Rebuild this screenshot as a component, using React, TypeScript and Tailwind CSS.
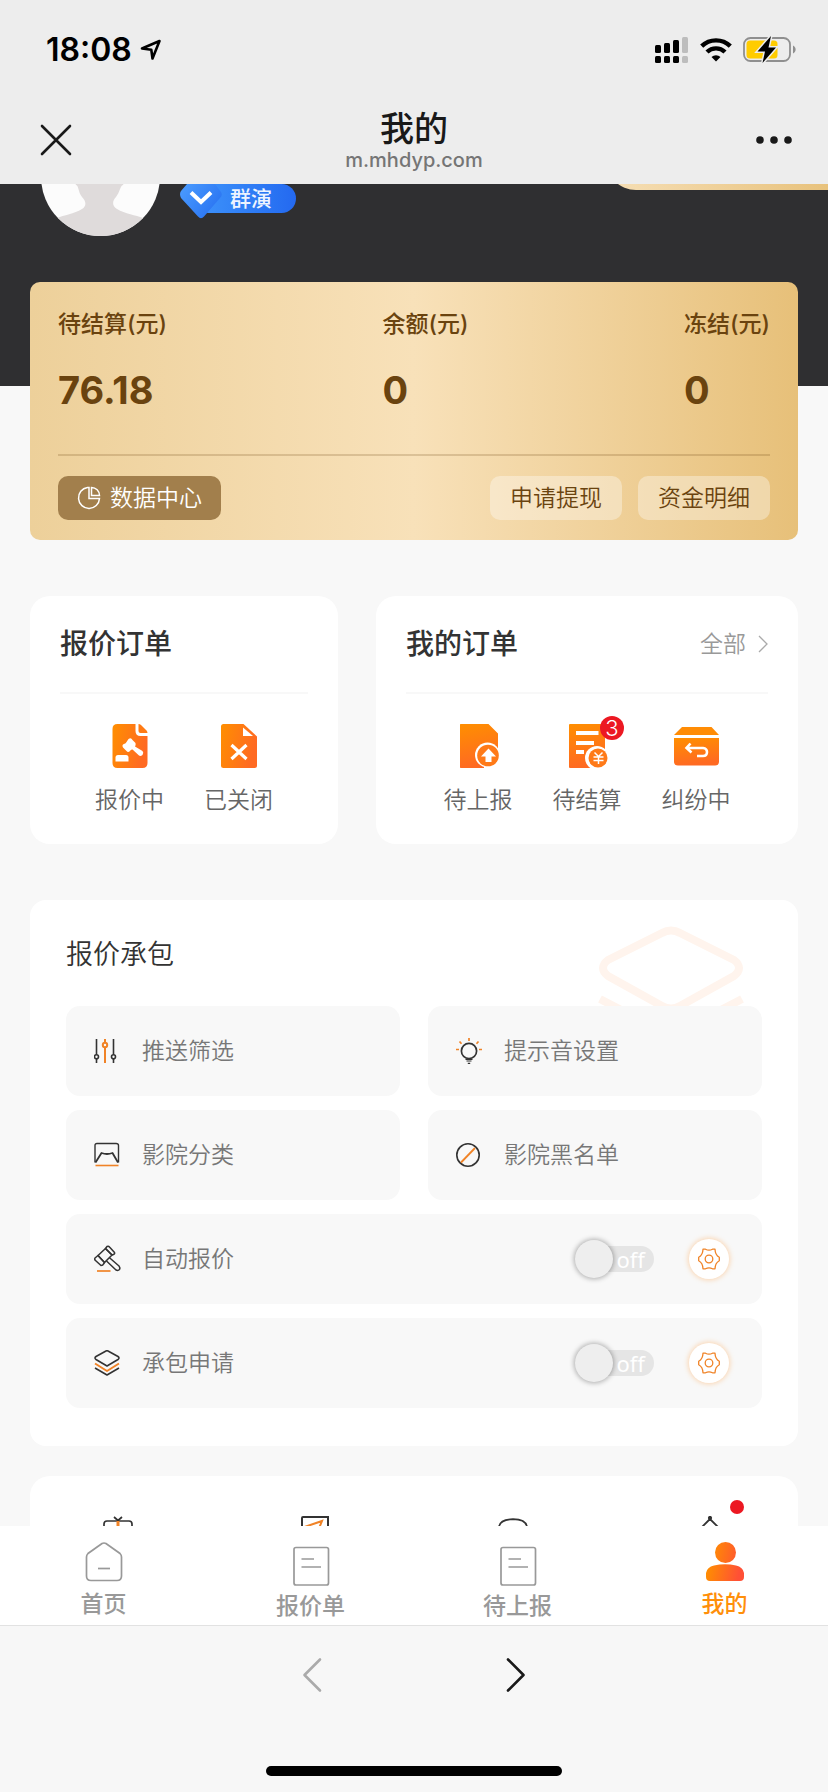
import React from "react";

const FONT = "font-['Inter','Noto_Sans_CJK_SC',sans-serif]";

function OrangeGradient({ id, vertical = false }: { id: string; vertical?: boolean }) {
  return (
    <defs>
      <linearGradient id={id} x1="0" y1="0" x2={vertical ? "0.2" : "1"} y2={vertical ? "1" : "0.3"}>
        <stop offset="0" stopColor="#ff8f00" />
        <stop offset="1" stopColor="#ff6a22" />
      </linearGradient>
    </defs>
  );
}

function StatusBar() {
  return (
    <div className="flex h-[100px] items-center justify-between pl-[46px] pr-[31px]">
      <div className="flex items-center gap-2">
        <span className="text-[32px] leading-10 font-semibold text-black">18:08</span>
        <svg width="22" height="22" viewBox="0 0 22 22" fill="none" stroke="#000" strokeWidth="2.6" strokeLinejoin="round" strokeLinecap="round">
          <path d="M2 9.5 19.5 2 12.5 19.5 11.3 10.7Z" />
        </svg>
      </div>
      <div className="flex items-center gap-[11px]">
        <svg width="34" height="28" viewBox="0 0 34 28">
          <g fill="#000">
            <rect x="0" y="9" width="6" height="8" rx="1.5" />
            <rect x="9" y="7" width="6" height="10" rx="1.5" />
            <rect x="18" y="4" width="6" height="13" rx="1.5" />
            <rect x="0" y="20" width="6" height="7" rx="1.5" />
            <rect x="9" y="20" width="6" height="7" rx="1.5" />
            <rect x="18" y="20" width="6" height="7" rx="1.5" />
          </g>
          <g fill="#bdbdbd">
            <rect x="27" y="1" width="6" height="16" rx="1.5" />
            <rect x="27" y="20" width="6" height="7" rx="1.5" />
          </g>
        </svg>
        <svg width="32" height="24" viewBox="0 0 32 24" fill="none" stroke="#000" strokeWidth="4.4">
          <path d="M1.7 8.2A20.5 20.5 0 0 1 30.3 8.2" />
          <path d="M7 14A13 13 0 0 1 25 14" />
          <path d="M16 23.5 11.5 19A6.5 6.5 0 0 1 20.500 19Z" fill="#000" stroke="none" />
        </svg>
        <svg width="54" height="28" viewBox="0 0 54 28">
          <rect x="1" y="2" width="46" height="23" rx="6.500" fill="none" stroke="#8f8f8f" strokeWidth="1.8" />
          <rect x="3.500" y="4.500" width="31" height="18" rx="3.500" fill="#ffcc00" />
          <path d="M50 9.500C53.500 11 53.500 16 50 17.500Z" fill="#8f8f8f" />
          <path d="M28 0 14.500 15.500H22L19.500 27 33 11.500H25.500Z" fill="#000" stroke="#ededed" strokeWidth="3" paintOrder="stroke" />
        </svg>
      </div>
    </div>
  );
}

function TitleBar() {
  return (
    <div className="flex h-[84px] items-center justify-between px-[36px]">
      <button aria-label="关闭" className="mb-1 flex w-[60px] justify-start">
        <svg width="40" height="40" viewBox="0 0 40 40" stroke="#191919" strokeWidth="2.600" strokeLinecap="round">
          <path d="M6 6 34 34M34 6 6 34" />
        </svg>
      </button>
      <div className="mb-[3px] flex flex-col items-center">
        <h1 className="text-[34px] leading-[38px] font-medium text-[#191919]">我的</h1>
        <p className="text-[20px] leading-6 font-medium text-[#757575]">m.mhdyp.com</p>
      </div>
      <button aria-label="更多" className="mb-1 flex w-[60px] justify-end">
        <svg width="38" height="10" viewBox="0 0 38 10" fill="#191919">
          <circle cx="6" cy="5" r="3.800" />
          <circle cx="20" cy="5" r="3.800" />
          <circle cx="34" cy="5" r="3.800" />
        </svg>
      </button>
    </div>
  );
}

function Profile() {
  return (
    <section className="-mt-[67px] flex items-start bg-[#2f2f31] pb-[150px] pl-[41px]">
      <svg width="119" height="119" viewBox="0 0 119 119" className="shrink-0">
        <clipPath id="avatar">
          <circle cx="59.500" cy="59.500" r="59.500" />
        </clipPath>
        <g clipPath="url(#avatar)">
          <rect width="119" height="119" fill="#fcfcfc" />
          <path
            d="M59 18C42 18 32 30 32 46C32 56 33 63 35 68C38 69 37 75 41 80C45 84 46 89 41 92C33 97 23 98 16 101L8 119H111L102 101C95 98 84 97 76 92C71 89 71 84 75 80C79 75 79 69 82 68C85 63 86 56 86 46C86 30 76 18 59 18Z"
            fill="#dfdbdb"
          />
        </g>
      </svg>
      <div className="relative mt-[67px] ml-5">
        <span className="ml-[14px] flex h-[29px] w-[102px] items-center rounded-full bg-linear-to-r from-[#3f94fb] to-[#2469f0] pl-9 text-[21px] leading-none font-medium text-[#eef4ff]">
          群演
        </span>
        <svg width="44" height="36" viewBox="0 0 44 36" className="absolute top-0 left-0" fill="none">
          <defs>
            <linearGradient id="g-shield" x1="0" y1="0" x2="1" y2="0.6">
              <stop offset="0" stopColor="#4c9dff" />
              <stop offset="1" stopColor="#2a74f2" />
            </linearGradient>
          </defs>
          <path d="M7 0H35L41 8Q43 11 40 14L24 32.500Q21 36 18 32.500L1 14Q-1 10 1 7Z" fill="url(#g-shield)" />
          <path d="M11 8.500 21 18 31 8.500" stroke="#fff" strokeWidth="4" />
        </svg>
      </div>
      <div className="ml-auto h-[73px] w-[222px] rounded-bl-[30px] bg-linear-to-r from-[#f6dfb6] to-[#e8c27c]" />
    </section>
  );
}

const balances = [
  { label: "待结算(元)", value: "76.18" },
  { label: "余额(元)", value: "0" },
  { label: "冻结(元)", value: "0" },
];

function Wallet() {
  return (
    <section className="relative mx-[30px] -mt-[104px] rounded-[10px] bg-linear-to-r from-[#edd09a] via-[#f8e1b9] to-[#e7c079] px-7 pt-6 pb-5 text-[#6a430f]">
      <dl className="flex justify-between">
        {balances.map((b) => (
          <div key={b.label}>
            <dt className="text-[23px] leading-9 font-medium">{b.label}</dt>
            <dd className="mt-6 text-[38px] leading-12 font-bold">{b.value}</dd>
          </div>
        ))}
      </dl>
      <hr className="mt-10 border-t-2 border-[#6a430f]/20" />
      <div className="mt-5 flex items-center gap-4">
        <button className="mr-auto flex h-11 items-center gap-[9px] rounded-[10px] bg-[#a27f4c] px-[19px] text-[23px] font-[350] text-white">
          <svg width="24" height="24" viewBox="0 0 24 24" fill="none" stroke="#fff" strokeWidth="1.500">
            <path d="M10.500 1.500A10.500 10.500 0 1 0 22.500 12.500H12V1.500Z" />
            <path d="M14.500 1.500A8 8 0 0 1 22.500 9.500H14.500Z" />
          </svg>
          数据中心
        </button>
        <button className="h-11 rounded-[10px] bg-white/35 px-5 text-[23px] font-[350]">申请提现</button>
        <button className="h-11 rounded-[10px] bg-white/35 px-5 text-[23px] font-[350]">资金明细</button>
      </div>
    </section>
  );
}

function BiddingIcon() {
  return (
    <svg width="48" height="44" viewBox="0 0 48 44">
      <OrangeGradient id="g-bidding" />
      <path d="M11.500 0H29.500V7Q29.500 12 34.500 12H41.500V39Q41.500 44 36.500 44H11.500Q6.500 44 6.500 39V5Q6.500 0 11.500 0Z" fill="url(#g-bidding)" />
      <path d="M32.500 0Q34 0 35 1L40.500 6.500Q41.500 7.500 41.500 9H34.500Q32.500 9 32.500 7Z" fill="#ff7a14" />
      <g fill="#fff">
        <path d="M22.500 15Q25 13 26.500 16L29.500 19Q30 21 29 22.500L36.500 27Q38 28.500 36.500 31Q34.500 32.500 33 31.500L26.500 25.500Q25 25 24 27Q22 29 20.500 27L17 23.500Q15.500 21 18 20Q20 19.500 20.500 18Z" />
        <path d="M9.500 37.500V33.500Q9.500 31 12 31H20Q22.500 31 22.500 33.500V37.500Z" />
      </g>
    </svg>
  );
}

function ClosedIcon() {
  return (
    <svg width="48" height="44" viewBox="0 0 48 44">
      <OrangeGradient id="g-closed" />
      <path d="M8.500 0H28.500L42 12.500V41.500Q42 44 39.500 44H8.500Q6 44 6 41.500V2.500Q6 0 8.500 0Z" fill="url(#g-closed)" />
      <path d="M28 3.500V12H38Z" fill="#fff" />
      <path d="M16.500 21 31.500 35M31.500 21 16.500 35" stroke="#fff" strokeWidth="3.200" />
    </svg>
  );
}

function ReportIcon() {
  return (
    <svg width="48" height="44" viewBox="0 0 48 44">
      <OrangeGradient id="g-report" vertical />
      <path d="M6.500 0H34.500L44 9.500V31H30V44H6.500Q6 44 6 43V1Q6 0 6.500 0Z" fill="url(#g-report)" />
      <circle cx="33.500" cy="31" r="12.500" fill="#fff" />
      <circle cx="34" cy="31.500" r="10.800" fill="#ff7a18" />
      <path d="M34.500 24.500 42 32.500H37.500V38H31.500V32.500H27Z" fill="#fff" />
    </svg>
  );
}

function SettleIcon() {
  return (
    <svg width="48" height="44" viewBox="0 0 48 44">
      <OrangeGradient id="g-settle" vertical />
      <path d="M7 0H42V34H30V44H7Q6 44 6 43V1Q6 0 7 0Z" fill="url(#g-settle)" />
      <path d="M13 7H35.500V11H13ZM13 17H31V21H13ZM13 26H21V30H13Z" fill="#fff" />
      <circle cx="34" cy="34" r="12" fill="#fff" />
      <circle cx="35" cy="34" r="9.500" fill="#ff7a18" />
      <path d="M31.500 28.500 35.500 32.500 39.500 28.500M30.500 33H40.500M30.500 36.500H40.500M35.500 32.500V40" stroke="#fff" strokeWidth="1.500" fill="none" />
    </svg>
  );
}

function DisputeIcon() {
  return (
    <svg width="48" height="44" viewBox="0 0 48 44">
      <OrangeGradient id="g-dispute" vertical />
      <path d="M10 3H39.500L47 11H2Z" fill="#ff8c05" />
      <path d="M2 14H47V37.500Q47 41.500 43 41.500H6Q2 41.500 2 37.500Z" fill="url(#g-dispute)" />
      <path d="M18.500 19.500 14.500 24 19.500 28.500M15 24H31Q35 24.500 35 28Q35 32 31 32H25" stroke="#fff" strokeWidth="2.600" fill="none" />
    </svg>
  );
}

function OrderItem({ icon, label, count }: { icon: React.ReactNode; label: string; count?: number }) {
  return (
    <a href="#" className="flex w-[109px] flex-col items-center gap-[14px] text-[23px] leading-9 font-[350] text-[#666]">
      <span className="relative">
        {icon}
        {count !== undefined && (
          <span className="absolute -top-2 left-[37px] flex size-6 items-center justify-center rounded-full bg-[#ec1822] text-[22px] leading-none text-white">
            {count}
          </span>
        )}
      </span>
      {label}
    </a>
  );
}

function Orders() {
  return (
    <div className="mx-[30px] mt-14 grid grid-cols-[308fr_422fr] gap-[38px]">
      <section className="rounded-[20px] bg-white px-[30px] pb-[26px]">
        <h2 className="flex h-[98px] items-center border-b-2 border-[#f8f8f8] text-[28px] font-medium text-[#333]">报价订单</h2>
        <div className="mt-[30px] flex justify-center">
          <OrderItem icon={<BiddingIcon />} label="报价中" />
          <OrderItem icon={<ClosedIcon />} label="已关闭" />
        </div>
      </section>
      <section className="rounded-[20px] bg-white px-[30px] pb-[26px]">
        <div className="flex h-[98px] items-center justify-between border-b-2 border-[#f8f8f8]">
          <h2 className="text-[28px] font-medium text-[#333]">我的订单</h2>
          <a href="#" className="flex items-center gap-3 text-[23px] font-[350] text-[#999]">
            全部
            <svg width="10" height="18" viewBox="0 0 10 18" fill="none" stroke="#aaa" strokeWidth="1.300">
              <path d="M1 1 9 9 1 17" />
            </svg>
          </a>
        </div>
        <div className="mt-[30px] flex justify-center">
          <OrderItem icon={<ReportIcon />} label="待上报" />
          <OrderItem icon={<SettleIcon />} label="待结算" count={3} />
          <OrderItem icon={<DisputeIcon />} label="纠纷中" />
        </div>
      </section>
    </div>
  );
}

const DARK = "#333";
const ORANGE = "#f08327";

const FilterIcon = () => (
  <svg width="26" height="26" viewBox="0 0 26 26" fill="none" stroke={DARK} strokeWidth="1.600">
    <path d="M2.500 1V16.500M2.500 21V25M19.500 1V16.500M19.500 21V25" />
    <circle cx="2.500" cy="18.800" r="2" />
    <circle cx="19.500" cy="18.800" r="2" />
    <g stroke={ORANGE} strokeWidth="2">
      <path d="M11 1V5M11 9.500V25" />
      <circle cx="11" cy="7" r="2.200" />
    </g>
  </svg>
);

const BulbIcon = () => (
  <svg width="26" height="26" viewBox="0 0 26 26" fill="none">
    <circle cx="13" cy="13" r="7.600" stroke={DARK} strokeWidth="1.700" />
    <path d="M9.500 21.500H16.500M10.500 23H15.500M11.800 25.300H14.200" stroke={DARK} strokeWidth="1.200" />
    <path d="M13 0V3M3.500 3.500 5.500 5.800M22.500 3.500 20.500 5.800M0 11.500H3M23 11.500H26" stroke={ORANGE} strokeWidth="1.700" />
  </svg>
);

const CinemaIcon = () => (
  <svg width="26" height="26" viewBox="0 0 26 26" fill="none" stroke={DARK} strokeLinejoin="round">
    <path d="M1 20.500V3.500Q1 1.500 3 1.500H22Q24.500 1.500 24.500 3.500V20.500" strokeWidth="1.400" />
    <path d="M1.500 20.500 7.500 11Q13 13 18.500 11L24 20.500" strokeWidth="1.800" />
    <path d="M1.500 23.500H24.500" stroke={ORANGE} strokeWidth="1.600" />
  </svg>
);

const BlockIcon = () => (
  <svg width="26" height="26" viewBox="0 0 26 26" fill="none" strokeWidth="1.600">
    <circle cx="12" cy="13" r="11.200" stroke={DARK} />
    <path d="M5 20.500 19 6" stroke={ORANGE} strokeWidth="1.800" />
  </svg>
);

const GavelIcon = () => (
  <svg width="28" height="28" viewBox="0 0 28 28" fill="none" stroke={DARK} strokeWidth="1.500" strokeLinejoin="round" className="-mr-[2px]">
    <path d="M11.500 3.500 13 1.500Q14.500 .8 15.500 2L20.500 7.500Q21 9 19.500 9.500L18 10Z" />
    <path d="M4 10.500 11.500 3.500 18 10 10.500 17.500Z" />
    <path d="M4 10.500 1 13Q.3 14.500 1.500 15.500L7 20.500Q9 20.500 9.500 19L10.500 17.500Z" />
    <path d="M12.500 16 22 25Q24 26 25.500 24.500Q26.500 23 25 21L15.500 12.800" />
    <path d="M3 26H16.500" stroke={ORANGE} strokeWidth="1.700" />
  </svg>
);

const LayersIcon = () => (
  <svg width="26" height="26" viewBox="0 0 26 26" fill="none" stroke={DARK} strokeWidth="1.600" strokeLinejoin="round">
    <path d="M12 1Q13 .5 14 1L24 6.500Q26 8 24 9.500L13 16 2 9.500Q0 8 2 6.500Z" />
    <path d="M1 13.500 13 21 25 13.500" stroke={ORANGE} strokeWidth="2" />
    <path d="M1 18 13 25 25 18" />
  </svg>
);

function Tile({ icon, label }: { icon: React.ReactNode; label: string }) {
  return (
    <a href="#" className="flex h-[90px] items-center gap-[22px] rounded-[14px] bg-[#f8f8f8] px-7 text-[23px] font-[350] text-[#777]">
      {icon}
      {label}
    </a>
  );
}

function GearIcon() {
  return (
    <svg width="22" height="22" viewBox="0 0 22 22" fill="none" stroke={ORANGE} strokeWidth="1.300" strokeLinejoin="round">
      <path d="M5 1.200H7.500Q11 3.200 14.500 1.200H17Q17.200 7 21.300 9.200V12.800Q17.200 15 17 20.800H14.500Q11 18.800 7.500 20.800H5Q4.800 15 .7 12.800V9.200Q4.800 7 5 1.200Z" />
      <circle cx="11" cy="11" r="3.800" />
    </svg>
  );
}

function SwitchRow({ id, icon, label }: { id: string; icon: React.ReactNode; label: string }) {
  return (
    <div className="flex h-[90px] items-center rounded-[14px] bg-[#f8f8f8] pr-[33px] pl-7 text-[23px] font-[350] text-[#777]">
      <label htmlFor={id} className="flex grow items-center gap-[22px]">
        {icon}
        {label}
      </label>
      <label htmlFor={id} className="flex items-center">
        <input id={id} type="checkbox" role="switch" className="peer sr-only" />
        <span className="relative z-10 size-[38px] rounded-full bg-[#eee] shadow-[0_0_5px_1px_rgba(0,0,0,0.3)]" />
        <span className="-ml-[19px] flex h-[26px] w-[60px] items-center justify-end rounded-r-full bg-[#e5e5e5] pr-[9px] font-['Noto_Sans',sans-serif] text-[22px] leading-none font-normal text-white">
          off
        </span>
      </label>
      <button
        aria-label={`${label}设置`}
        className="ml-[35px] flex size-10 items-center justify-center rounded-full bg-white shadow-[0_0_5px_1px_rgba(255,160,70,0.4)]"
      >
        <GearIcon />
      </button>
    </div>
  );
}

function Contracting() {
  return (
    <section className="relative mx-[30px] mt-14 rounded-2xl bg-white px-9 pb-[38px]">
      <svg width="146" height="110" viewBox="0 0 146 110" fill="none" stroke="#fff4ed" strokeWidth="8" strokeLinejoin="round" className="absolute top-[26px] right-[54px]">
        <path d="M64 7Q73 2 82 7L136 34Q146 42 136 50L82 80Q73 85 64 80L10 50Q0 42 10 34Z" />
        <path d="M2 73 73 110 144 73" />
      </svg>
      <h2 className="flex h-[106px] items-center pt-1 text-[27px] font-[350] text-[#333]">报价承包</h2>
      <div className="relative flex flex-col gap-[14px]">
        <div className="grid grid-cols-2 gap-x-7 gap-y-[14px]">
          <Tile icon={<FilterIcon />} label="推送筛选" />
          <Tile icon={<BulbIcon />} label="提示音设置" />
          <Tile icon={<CinemaIcon />} label="影院分类" />
          <Tile icon={<BlockIcon />} label="影院黑名单" />
        </div>
        <SwitchRow id="auto-quote" icon={<GavelIcon />} label="自动报价" />
        <SwitchRow id="contract-apply" icon={<LayersIcon />} label="承包申请" />
      </div>
    </section>
  );
}

function Shortcuts() {
  return (
    <section className="mx-[30px] mt-[30px] flex h-40 justify-between rounded-t-[20px] bg-white px-[42px] pt-10">
      <a href="#" aria-label="礼物" className="flex w-[92px] justify-center">
        <svg width="30" height="32" viewBox="0 0 30 32" fill="none" stroke={DARK} strokeWidth="1.700">
          <path d="M11 1 15 4.500 19 1" />
          <path d="M1 14V8Q1 5 4 5H26Q29 5 29 8V14ZM4 14V30H26V14" />
          <path d="M15 5V30" stroke={ORANGE} strokeWidth="3" />
        </svg>
      </a>
      <a href="#" aria-label="反馈" className="flex w-[92px] justify-center">
        <svg width="28" height="32" viewBox="0 0 28 32" fill="none" stroke={DARK} strokeWidth="2">
          <path d="M27 12V1H2Q1 1 1 2V30H27V22" />
          <path d="M5 10.500 21 5 14 22 11 14Z" stroke={ORANGE} />
        </svg>
      </a>
      <a href="#" aria-label="客服" className="flex w-[92px] justify-center">
        <svg width="32" height="32" viewBox="0 0 32 32" fill="none" stroke={DARK} strokeWidth="1.700">
          <path d="M2 12Q2 3.500 16 3.200Q30 3.500 30 12V22Q30 30 16 30Q2 30 2 22Z" />
        </svg>
      </a>
      <a href="#" aria-label="设置" className="relative flex w-[92px] justify-center">
        <svg width="32" height="32" viewBox="0 0 32 32" fill="none" stroke={DARK} strokeWidth="1.800">
          <circle cx="16" cy="2" r="1.200" fill={DARK} />
          <path d="M16 3 5 14V28H27V14Z" />
        </svg>
        <span className="absolute -top-4 left-[66px] size-[14px] rounded-full bg-[#ec1822]" />
      </a>
    </section>
  );
}

const HomeIcon = () => (
  <svg width="38" height="40" viewBox="0 0 38 40" fill="none" stroke="#999" strokeWidth="1.700">
    <path d="M17 1.500Q19 .5 21 1.500L35 11.500Q36.500 13 36.500 15V34Q36.500 38.500 32 38.500H6Q1.500 38.500 1.500 34V15Q1.500 13 3 11.500Z" />
    <path d="M13 26.500H25" />
  </svg>
);

const ListIcon = () => (
  <svg width="38" height="40" viewBox="0 0 38 40" fill="none" stroke="#999" strokeWidth="1.700">
    <rect x="2" y="1.500" width="34.500" height="37.500" rx="2" />
    <path d="M9.500 13H22M9.500 21H29" />
  </svg>
);

const PersonIcon = () => (
  <svg width="38" height="40" viewBox="0 0 38 40">
    <defs>
      <linearGradient id="g-person" gradientUnits="userSpaceOnUse" x1="0" y1="0" x2="38" y2="8">
        <stop offset="0.150" stopColor="#ff8f00" />
        <stop offset="1" stopColor="#ff5036" />
      </linearGradient>
    </defs>
    <g fill="url(#g-person)">
      <circle cx="19.500" cy="10.500" r="10.500" />
      <path d="M0 31Q1 25 8 23.500Q19 21 30 23.500Q37 25 38 31V35Q38 39 34 39H4Q0 39 0 35Z" />
    </g>
  </svg>
);

const tabs = [
  { label: "首页", icon: <HomeIcon />, style: "pt-4 gap-[6px] text-[#999]" },
  { label: "报价单", icon: <ListIcon />, style: "pt-5 gap-1 text-[#999]" },
  { label: "待上报", icon: <ListIcon />, style: "pt-5 gap-1 text-[#999]" },
  { label: "我的", icon: <PersonIcon />, style: "pt-4 gap-[6px] text-[#ff8f0a]" },
];

function TabBar() {
  return (
    <nav className="grid h-[100px] shrink-0 grid-cols-4 border-b border-[#e2e2e2] bg-white">
      {tabs.map((t) => (
        <a key={t.label} href="#" className={`flex flex-col items-center text-[23px] leading-8 font-medium ${t.style}`}>
          {t.icon}
          {t.label}
        </a>
      ))}
    </nav>
  );
}

function BrowserBar() {
  return (
    <footer className="flex h-[166px] shrink-0 flex-col items-center justify-between bg-[#f7f7f7] pt-[30px] pb-4">
      <div className="flex gap-[164px]">
        <button aria-label="后退">
          <svg width="38" height="38" viewBox="0 0 38 38" fill="none" stroke="#aaa" strokeWidth="2.600" strokeLinecap="round" strokeLinejoin="round">
            <path d="M26 3.500 10.500 19 26 34.500" />
          </svg>
        </button>
        <button aria-label="前进">
          <svg width="38" height="38" viewBox="0 0 38 38" fill="none" stroke="#191919" strokeWidth="2.600" strokeLinecap="round" strokeLinejoin="round">
            <path d="M12 3.500 27.500 19 12 34.500" />
          </svg>
        </button>
      </div>
      <div className="h-[10px] w-[296px] rounded-full bg-black" />
    </footer>
  );
}

export default function App() {
  return (
    <div className={`flex h-screen flex-col bg-[#f8f8f8] ${FONT}`}>
      <header className="shrink-0 bg-[#ededed]">
        <StatusBar />
        <TitleBar />
      </header>
      <main className="min-h-0 grow overflow-hidden">
        <Profile />
        <Wallet />
        <Orders />
        <Contracting />
        <Shortcuts />
      </main>
      <TabBar />
      <BrowserBar />
    </div>
  );
}
